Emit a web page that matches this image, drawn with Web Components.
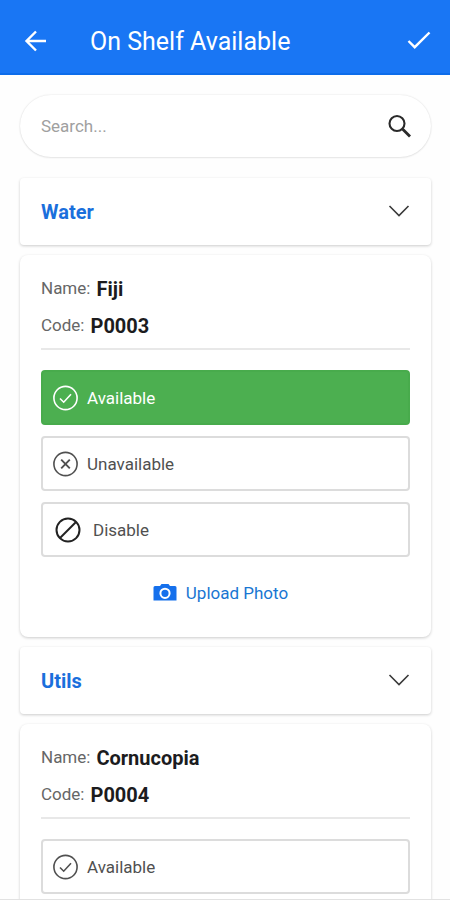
<!DOCTYPE html>
<html lang="en">
<head>
<meta charset="utf-8">
<meta name="viewport" content="width=device-width, initial-scale=1">
<title>On Shelf Available</title>
<style>
  body { margin: 0; background: #fefefe; font-family: Roboto, "Liberation Sans", sans-serif; color: #1c1c1e; }
</style>
</head>
<body>
<shelf-app>
  <app-bar slot="bar">On Shelf Available</app-bar>
  <search-field placeholder="Search..."></search-field>
  <section-toggle>Water</section-toggle>
  <product-card choice="available" statuses="available unavailable disable" photo>
    <span slot="name">Fiji</span>
    <span slot="code">P0003</span>
  </product-card>
  <section-toggle>Utils</section-toggle>
  <product-card statuses="available">
    <span slot="name">Cornucopia</span>
    <span slot="code">P0004</span>
  </product-card>
</shelf-app>

<script>
  function define(name, html, setup) {
    const template = document.createElement('template');
    template.innerHTML = html;
    customElements.define(name, class extends HTMLElement {
      constructor() {
        super();
        this.attachShadow({ mode: 'open' }).append(template.content.cloneNode(true));
      }
      connectedCallback() {
        if (setup) setup(this, this.shadowRoot);
      }
    });
  }

  define('shelf-app', `
    <style>
      :host { display: flex; flex-direction: column; height: 100vh; }
      main { flex: 1; min-height: 0; overflow: hidden auto; scrollbar-width: none;
             display: flex; flex-direction: column; gap: 10px; padding: 20px 19px 0 20px;
             border-bottom: 1px solid #e2e2e2; }
      ::slotted(*) { flex: none; }
    </style>
    <slot name="bar"></slot>
    <main><slot></slot></main>`);

  define('app-bar', `
    <style>
      :host { display: block; background: #1976f4; color: #fff; border-bottom: 2px solid #0d6cea; }
      header { display: flex; align-items: center; height: 63px; padding: 10px 17px 0 22px; }
      button { display: grid; place-items: center; padding: 0; border: 0; background: none; color: inherit; width: 28px; height: 40px; }
      h1 { flex: 1; margin: 0 0 0 40px; font-size: 25px; font-weight: 400; line-height: 32px; }
      svg { fill: none; stroke: currentColor; stroke-width: 2.400; }
    </style>
    <header>
      <button type="button" aria-label="Back"><svg width="28" height="28" viewBox="0 0 28 28"><path d="M24 13H5M14 3.500L4.500 13l9.500 9.500"/></svg></button>
      <h1><slot></slot></h1>
      <button type="button" aria-label="Confirm"><svg width="28" height="28" viewBox="0 0 28 28"><path d="M3.500 13l6.200 6.200L24.500 4.500"/></svg></button>
    </header>`);

  define('search-field', `
    <style>
      :host { display: block; margin-bottom: 11px; }
      label { display: flex; align-items: center; height: 62px; padding: 0 17px 0 21px; border-radius: 31px;
              background: #fff; box-shadow: 0 0 2px #0002, 0 1px 2px #0001; }
      input { flex: 1; min-width: 0; padding: 0; border: 0; outline: 0; background: none; font: 17px/24px Roboto, sans-serif; color: #222; }
      input::placeholder { color: #a0a0a0; opacity: 1; }
      svg { fill: none; stroke: #2a2a2a; }
    </style>
    <label>
      <input type="text" aria-label="Search">
      <svg width="28" height="28" viewBox="0 0 28 28"><circle cx="11" cy="11.500" r="7.500" stroke-width="2.100"/><path d="M16.500 17L24 24.500" stroke-width="2.800"/></svg>
    </label>`, (host, root) => {
      root.querySelector('input').placeholder = host.getAttribute('placeholder') || '';
    });

  define('section-toggle', `
    <style>
      :host { display: block; }
      button { display: flex; align-items: center; justify-content: space-between; width: 100%; height: 67px;
               padding: 0 20px 0 21px; border: 0; border-radius: 4px; background: #fff; color: #1a6fdc;
               font: 700 20px/24px Roboto, sans-serif; text-align: left; box-shadow: 0 1px 3px #0003; }
      svg { fill: none; stroke: #3a3a3a; stroke-width: 1.600; }
    </style>
    <button type="button" aria-expanded="true"><span><slot></slot></span>
      <svg width="24" height="24" viewBox="0 0 24 24"><path d="M2.500 6L12 15.500 21.500 6"/></svg>
    </button>`);

  define('product-card', `
    <style>
      :host { display: block; box-sizing: border-box; padding: 14px 21px 19px; border-radius: 8px; background: #fff; box-shadow: 0 1px 3px #0003; }
      dl { margin: 0 0 20px; padding-bottom: 5px; border-bottom: 2px solid #e8e8e8; }
      dl div { display: flex; align-items: center; gap: 6px; height: 37px; }
      dt { color: #666; font-size: 17px; line-height: 24px; }
      dd { margin: 0; padding-top: 2px; font-size: 20px; line-height: 24px; font-weight: 700; color: #1c1c1e; }
      fieldset { display: grid; gap: 11px; margin: 0; padding: 0; border: 0; min-width: 0; }
      label { position: relative; display: flex; align-items: center; gap: 8px; box-sizing: border-box; height: 55px; padding: 0 10px;
              border: 2px solid #dcdcdc; border-radius: 4px; color: #505050; font-size: 17px; line-height: 24px; }
      label.wide { gap: 12px; padding-left: 12px; }
      input { appearance: none; position: absolute; inset: 0; margin: 0; }
      label:has(:checked) { background: #4caf50; border-color: #48ab4c; color: #fff; }
      label svg { fill: none; stroke: currentColor; stroke-width: 1.600; }
      label.wide svg { stroke: #222; stroke-width: 2; }
      .upload { display: flex; align-items: center; justify-content: center; gap: 9px; width: 100%; height: 50px; margin-top: 11px;
                padding: 0 10px 0 0; border: 0; background: none; color: #1976d2; font: 17px/24px Roboto, sans-serif; }
      .upload svg { fill: #1570ec; }
    </style>
    <dl>
      <div><dt>Name:</dt><dd><slot name="name"></slot></dd></div>
      <div><dt>Code:</dt><dd><slot name="code"></slot></dd></div>
    </dl>
    <fieldset aria-label="Shelf status">
      <label><input type="radio" name="status" value="available">
        <svg width="26" height="26" viewBox="0 0 26 26"><circle cx="12.500" cy="13" r="11.600"/><path d="M7 13.500l3.700 3.700 7.300-8"/></svg>
        <span>Available</span></label>
      <label><input type="radio" name="status" value="unavailable">
        <svg width="26" height="26" viewBox="0 0 26 26"><circle cx="12.500" cy="13" r="11.600"/><path stroke-width="1.900" d="M8.200 8.700l8.600 8.600M16.800 8.700l-8.600 8.600"/></svg>
        <span>Unavailable</span></label>
      <label class="wide"><input type="radio" name="status" value="disable">
        <svg width="26" height="26" viewBox="0 0 26 26"><circle cx="13" cy="13" r="11.500"/><path d="M5 21L21 5"/></svg>
        <span>Disable</span></label>
    </fieldset>
    <button class="upload" type="button">
      <svg width="24" height="24" viewBox="0 0 24 24"><path fill-rule="evenodd" d="M2 5h5L8.500 3h7L17 5h5a1.500 1.500 0 0 1 1.500 1.500v13h-23v-13A1.500 1.500 0 0 1 2 5zM12 6.700a5.600 5.600 0 1 0 0 11.200 5.600 5.600 0 0 0 0-11.200z"/><path d="M12 8.700a3.600 3.600 0 1 0 0 7.200 3.600 3.600 0 0 0 0-7.200z"/></svg>
      <span>Upload Photo</span>
    </button>`, (host, root) => {
      const statuses = (host.getAttribute('statuses') || '').split(' ');
      for (const input of root.querySelectorAll('input')) {
        if (!statuses.includes(input.value)) input.parentElement.remove();
        else input.checked = input.value === host.getAttribute('choice');
      }
      if (!host.hasAttribute('photo')) root.querySelector('.upload')?.remove();
    });
</script>
</body>
</html>
